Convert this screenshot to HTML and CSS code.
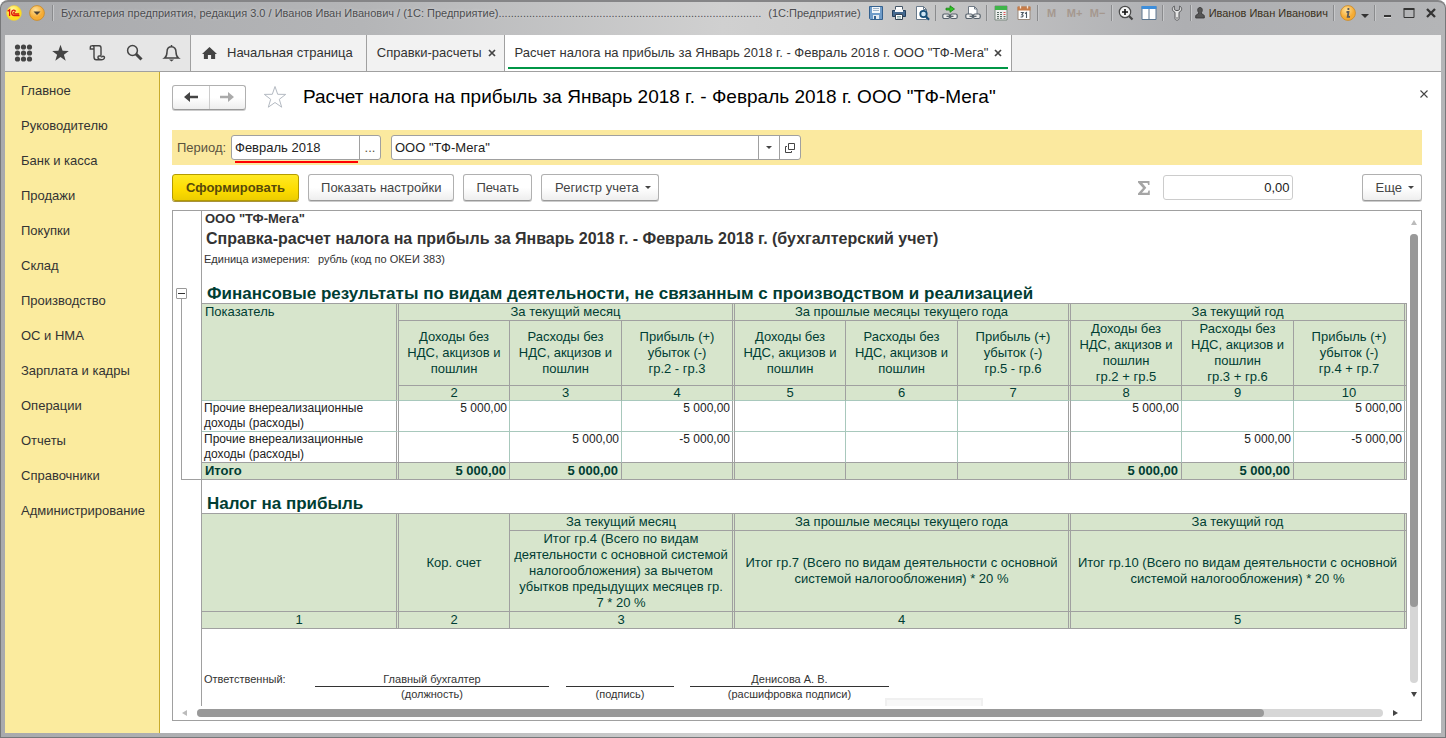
FILE: index.html
```html
<!DOCTYPE html>
<html lang="ru">
<head>
<meta charset="utf-8">
<title>Бухгалтерия предприятия</title>
<link rel="stylesheet" href="styles.css">
</head>
<body>
<div class="window">
  <header class="titlebar">
    <svg class="logo" viewBox="0 0 16 16"><defs><radialGradient id="ylw" cx=".4" cy=".3"><stop offset="0" stop-color="#fffbb0"/><stop offset="1" stop-color="#ffdf1e"/></radialGradient><radialGradient id="org" cx=".4" cy=".3"><stop offset="0" stop-color="#ffe19a"/><stop offset="1" stop-color="#f5ac35"/></radialGradient></defs><circle cx="8" cy="8" r="7.5" fill="url(#ylw)" stroke="#e6c64a" stroke-width=".6"/><path d="M1.600 6.200 3.600 4.700V11M9.600 6.400C8.800 4.400 5.600 4.700 5.600 7.800c0 2.300 1.400 2.800 2.600 2.800H13.500M8.900 7.300c-1.300-.5-1.600 1.500-.3 1.700h4.600" fill="none" stroke="#e0140c" stroke-width="1.300"/></svg>
    <button class="round" aria-label="Главное меню"><svg viewBox="0 0 16 16"><circle cx="8" cy="8" r="7.400" fill="url(#org)" stroke="#c98824" stroke-width=".8"/><path d="M4.500 6.500h7L8 10z" fill="#4a4034"/></svg></button>
    <i class="sep"></i>
    <span class="app">Бухгалтерия предприятия, редакция 3.0 / Иванов Иван Иванович / (1С: Предприятие)......................................................................................</span>
    <span class="app">(1С:Предприятие)</span>
    <div class="tools">
      <button aria-label="Сохранить"><svg viewBox="0 0 16 16"><path d="M1.500 1.500h13v13h-12l-1-1z" fill="#6f9cc9" stroke="#34618f"/><path d="M4 2h8v6H4z" fill="#f2f6fa"/><path d="M5 3.500h6M5 5.500h6" stroke="#9db3c8"/><path d="M5 10h6v4H5z" fill="#e4ebf2"/><path d="M6 11h2v3H6z" fill="#34618f"/></svg></button>
      <button aria-label="Печать"><svg viewBox="0 0 16 16"><path d="M4.500 1.500h7v5h-7z" fill="#fff" stroke="#456"/><path d="M1.500 5.500h13v6h-13z" fill="#44698f" stroke="#24405c"/><path d="M4 4.500h8V7H4z" fill="#f5f7f9"/><path d="M4.500 9.500h7v5h-7z" fill="#fff" stroke="#345"/><path d="M6 11.500h4M6 13h4" stroke="#8aa"/></svg></button>
      <button aria-label="Просмотр"><svg viewBox="0 0 16 16"><path d="M2.500 1.500h7l3 3v10h-10z" fill="#fff" stroke="#68798a"/><path d="M9.500 1.500v3h3" fill="none" stroke="#68798a"/><circle cx="9.500" cy="9" r="3.200" fill="#cfe6f5" stroke="#174f78" stroke-width="1.800"/><path d="m12 11.500 3 3.200" stroke="#174f78" stroke-width="2.200"/></svg></button>
      <i class="sep tight"></i>
      <button aria-label="Получить ссылку"><svg viewBox="0 0 16 16"><path d="M4 3.200h4V.8L12.500 4 8 7.300V5H4z" fill="#2fc527" stroke="#168212" stroke-width=".8"/><rect x=".8" y="9" width="6.700" height="4.500" rx="1.500" fill="#eee" stroke="#56616b" stroke-width="1.200"/><rect x="8.500" y="9" width="6.700" height="4.500" rx="1.500" fill="#eee" stroke="#56616b" stroke-width="1.200"/><path d="M4.500 11.300h7" stroke="#56616b" stroke-width="1.300"/></svg></button>
      <button aria-label="Перейти по ссылке"><svg viewBox="0 0 16 16"><path d="M3.500 10V1.500h6l2.500 2.500v6" fill="#fff" stroke="#6f7984"/><path d="M9.500 1.500V4H12" fill="none" stroke="#6f7984"/><rect x=".8" y="9" width="6.700" height="4.500" rx="1.500" fill="#eee" stroke="#56616b" stroke-width="1.200"/><rect x="8.500" y="9" width="6.700" height="4.500" rx="1.500" fill="#eee" stroke="#56616b" stroke-width="1.200"/><path d="M4.500 11.300h7" stroke="#56616b" stroke-width="1.300"/></svg></button>
      <i class="sep tight"></i>
      <button aria-label="Калькулятор"><svg viewBox="0 0 16 16"><path d="M2 1h12v14H2z" fill="#eef0ee" stroke="#7d8a80"/><path d="M2 1h12v4H2z" fill="#3fb54a"/><path d="M4 7.500h2m1 0h2M4 9.500h2m1 0h2M4 11.500h2m1 0h2M4 13.300h2m1 0h2" stroke="#5d6f66"/><path d="M10.500 7.500h2M10.500 9.500h2" stroke="#d55"/><path d="M10.500 11.500h2m-2 1.800h2" stroke="#5d6f66"/></svg></button>
      <button aria-label="Календарь"><svg viewBox="0 0 16 16"><path d="M2 2h12v12.500H2z" fill="#fff" stroke="#98897c"/><path d="M1.500 1.500h13v4h-13z" fill="#c67c49"/><path d="M4.500.5v3m7-3v3" stroke="#f3e2d2" stroke-width="1.300"/><path d="M4.700 7.500h2.600L5.800 9.600c2 0 1.900 2.900-1.200 2.400M9 8.500l1.500-1V13" fill="none" stroke="#4d5963" stroke-width="1.100"/></svg></button>
      <i class="sep tight"></i>
      <button class="mem">M</button><button class="mem">M+</button><button class="mem">M−</button>
      <i class="sep tight"></i>
      <button aria-label="Масштаб"><svg viewBox="0 0 16 16"><circle cx="7" cy="7" r="5.700" fill="#f4f4f4" stroke="#4b4b4b" stroke-width="1.200"/><path d="M4 7h6M7 4v6" stroke="#111" stroke-width="1.600"/><path d="m11 11 3.500 3.500" stroke="#444" stroke-width="2.200"/></svg></button>
      <button aria-label="Панели"><svg viewBox="0 0 16 16"><path d="M1 1.500h14v13H1z" fill="#fff" stroke="#5c7791"/><path d="M.5 1h15v3H.5z" fill="#3d8edb"/><path d="M8 4v10.500" stroke="#5c7791"/></svg></button>
      <i class="sep tight"></i>
      <button aria-label="Настройка"><svg viewBox="0 0 16 16"><path d="M5.300 1C2.500 2.500 2.700 6 6 7.300V13.500c0 2.200 4 2.200 4 0V7.300C13.300 6 13.500 2.500 10.700 1v3.500L9 5.500H7L5.300 4.500z" fill="#e6e6e6" stroke="#58595b"/><circle cx="8" cy="13" r=".8" fill="#555"/></svg></button>
      <i class="sep tight"></i>
    </div>
    <button class="user"><svg viewBox="0 0 10 12"><path d="M5 .5c3 0 2.800 4 1 5.600L9.300 8.500V11H.7V8.500L4 6.100C2.200 4.500 2 .5 5 .5z" fill="#555" stroke="#333" stroke-width=".8"/></svg>Иванов Иван Иванович</button>
    <i class="sep tight"></i>
    <button class="round" aria-label="Информация"><svg viewBox="0 0 16 16"><circle cx="8" cy="8" r="7.400" fill="url(#org)" stroke="#c98824" stroke-width=".8"/><path d="M8.400 3v2M6.500 7h2l-.8 4.800H10" fill="none" stroke="#5b5b5b" stroke-width="1.800"/></svg></button>
    <button class="down" aria-label="Ещё"><svg viewBox="0 0 8 4"><path d="M0 0h8L4 4z" fill="#333"/></svg></button>
    <i class="sep tight"></i>
    <div class="wm">
      <button aria-label="Свернуть"><svg viewBox="0 0 12 12"><path d="M3 9h7" stroke="#333" stroke-width="2"/><path d="M3 10.500h7" stroke="#ddd"/></svg></button>
      <button aria-label="Развернуть"><svg viewBox="0 0 12 12"><path d="M1 2.500h10v8H1z" fill="none" stroke="#333"/><path d="M.5 2h11" stroke="#333" stroke-width="2"/></svg></button>
      <button aria-label="Закрыть"><svg viewBox="0 0 12 12"><path d="m2 2 8 8m0-8-8 8" stroke="#333" stroke-width="2.300"/></svg></button>
    </div>
  </header>

  <nav class="tabs">
    <div class="quick">
      <button aria-label="Разделы"><svg viewBox="0 0 18 18"><g fill="#444"><circle cx="3" cy="3" r="2.600"/><circle cx="9" cy="3" r="2.600"/><circle cx="15" cy="3" r="2.600"/><circle cx="3" cy="9" r="2.600"/><circle cx="9" cy="9" r="2.600"/><circle cx="15" cy="9" r="2.600"/><circle cx="3" cy="15" r="2.600"/><circle cx="9" cy="15" r="2.600"/><circle cx="15" cy="15" r="2.600"/></g></svg></button>
      <button aria-label="Избранное"><svg viewBox="0 0 18 18"><path d="m9 .8 2.100 5.900 6.200.2-4.900 3.800 1.800 6L9 13.100l-5.200 3.600 1.800-6L.7 6.900l6.200-.2z" fill="#444"/></svg></button>
      <button aria-label="История"><svg viewBox="0 0 18 18"><path d="M5.500 5H1.800V3.500C1.800 1 5.500 1 5.500 3.500V13c0 2 1 2.800 2.300 2.800h5.700M3.500 1.700h7.200C12 1.700 12.500 2.500 12.500 4v7.800M12.500 12h-2c-.8 0-1 .4-1 1v.6c0 2.900 6.500 3 6.500 0 0-1.800-3-1.800-3 0" fill="none" stroke="#444" stroke-width="1.400"/></svg></button>
      <button aria-label="Поиск"><svg viewBox="0 0 18 18"><circle cx="7" cy="6.500" r="4.900" fill="none" stroke="#444" stroke-width="1.500"/><path d="m10.500 10 5.500 5.500" stroke="#444" stroke-width="3"/></svg></button>
      <button aria-label="Оповещения"><svg viewBox="0 0 18 18"><path d="M9 1v1.500M2 14h14c-2-1.500-2.500-3-2.500-6S12 2.800 9 2.800 4.500 5 4.500 8 4 12.500 2 14z" fill="none" stroke="#444" stroke-width="1.500"/><path d="M6.500 15.500h5L9 17.500z" fill="#444"/></svg></button>
    </div>
    <a class="tab home" href="#"><svg viewBox="0 0 16 14"><path d="M8 .5 16 8h-2v5.500H9.700V9H6.300v4.500H2V8H0z" fill="#444"/></svg>Начальная страница</a>
    <a class="tab" href="#">Справки-расчеты<svg class="x" viewBox="0 0 8 8"><path d="m1 1 6 6m0-6L1 7" stroke="#444" stroke-width="1.700"/></svg></a>
    <a class="tab active" href="#">Расчет налога на прибыль за Январь 2018 г. - Февраль 2018 г. ООО "ТФ-Мега"<svg class="x" viewBox="0 0 8 8"><path d="m1 1 6 6m0-6L1 7" stroke="#444" stroke-width="1.700"/></svg></a>
  </nav>

  <div class="body">
    <aside class="side">
      <a href="#">Главное</a><a href="#">Руководителю</a><a href="#">Банк и касса</a><a href="#">Продажи</a><a href="#">Покупки</a><a href="#">Склад</a><a href="#">Производство</a><a href="#">ОС и НМА</a><a href="#">Зарплата и кадры</a><a href="#">Операции</a><a href="#">Отчеты</a><a href="#">Справочники</a><a href="#">Администрирование</a>
    </aside>

    <main class="main">
      <div class="head">
        <div class="history btn">
          <button aria-label="Назад"><svg viewBox="0 0 14 10"><path d="M6 0v3.700h8v2.600H6V10L0 5z" fill="#444"/></svg></button>
          <button aria-label="Вперед"><svg viewBox="0 0 14 10"><path d="M8 0v3.700H0v2.600h8V10l6-5z" fill="#aaa"/></svg></button>
        </div>
        <button class="fav" aria-label="В избранное"><svg viewBox="0 0 24 24"><path d="m12 1.500 2.700 7.800 8 .1-6.400 4.900 2.400 7.900-6.700-4.700-6.700 4.700 2.400-7.900L1.300 9.400l8-.1z" fill="none" stroke="#b4bac2"/></svg></button>
        <h1>Расчет налога на прибыль за Январь 2018 г. - Февраль 2018 г. ООО "ТФ-Мега"</h1>
        <button class="close" aria-label="Закрыть"><svg viewBox="0 0 8 8"><path d="m.5.5 7 7m0-7-7 7" stroke="#444" stroke-width="1.100"/></svg></button>
      </div>

      <div class="period">
        <label for="period">Период:</label>
        <div class="field date"><input id="period" value="Февраль 2018"><button aria-label="Выбрать">...</button></div>
        <div class="field org"><input aria-label="Организация" value='ООО "ТФ-Мега"'><button aria-label="Список"><svg class="tri" viewBox="0 0 6 3"><path d="M0 0h6L3 3z" fill="#444"/></svg></button><button aria-label="Открыть"><svg class="open" viewBox="0 0 10 10"><path d="M3.500.5h6v6h-6zM2 3.500H.5v6h6V8" fill="none" stroke="#444"/></svg></button></div>
      </div>

      <div class="actions">
        <button class="btn primary">Сформировать</button>
        <button class="btn">Показать настройки</button>
        <button class="btn">Печать</button>
        <button class="btn drop">Регистр учета<svg class="tri" viewBox="0 0 6 3"><path d="M0 0h6L3 3z" fill="#444"/></svg></button>
        <label class="sigma" for="sum" aria-label="Сумма"><svg viewBox="0 0 12 14"><path d="M0 0h11.500v4h-1.300L9.500 2H4.300l4 4.800L4 11.800h5.700l.8-2.300h1.300V14H0v-1.500l5-5.600-5-5.500z" fill="#a5a5a5"/></svg></label>
        <input id="sum" class="sum" value="0,00">
        <button class="btn drop">Еще<svg class="tri" viewBox="0 0 6 3"><path d="M0 0h6L3 3z" fill="#444"/></svg></button>
      </div>

      <section class="sheet">
        <div class="doc">
          <div class="block">
            <div class="gutter"></div>
            <div class="intro">
              <p class="company">ООО "ТФ-Мега"</p>
              <h2>Справка-расчет налога на прибыль за Январь 2018 г. - Февраль 2018 г. (бухгалтерский учет)</h2>
              <p class="unit"><span>Единица измерения:</span><span>рубль (код по ОКЕИ 383)</span></p>
            </div>
          </div>
          <div class="block">
            <div class="gutter group"><button class="fold" aria-label="Свернуть группу"></button><div class="bracket"></div></div>
            <div>
              <h3>Финансовые результаты по видам деятельности, не связанным с производством и реализацией</h3>
              <table>
                <colgroup><col class="c-name"><col class="c-a"><col class="c-b"><col class="c-c"><col class="c-a"><col class="c-b"><col class="c-c"><col class="c-a"><col class="c-b"><col class="c-c"></colgroup>
                <thead>
                  <tr class="caps"><th class="name dbl light" rowspan="3">Показатель</th><th class="dbl" colspan="3">За текущий месяц</th><th class="dbl" colspan="3">За прошлые месяцы текущего года</th><th class="dbl" colspan="3">За текущий год</th></tr>
                  <tr class="tall"><th>Доходы без<br>НДС, акцизов и<br>пошлин</th><th>Расходы без<br>НДС, акцизов и<br>пошлин</th><th class="dbl">Прибыль (+)<br>убыток (-)<br>гр.2 - гр.3</th><th>Доходы без<br>НДС, акцизов и<br>пошлин</th><th>Расходы без<br>НДС, акцизов и<br>пошлин</th><th class="dbl">Прибыль (+)<br>убыток (-)<br>гр.5 - гр.6</th><th>Доходы без<br>НДС, акцизов и<br>пошлин<br>гр.2 + гр.5</th><th>Расходы без<br>НДС, акцизов и<br>пошлин<br>гр.3 + гр.6</th><th class="dbl">Прибыль (+)<br>убыток (-)<br>гр.4 + гр.7</th></tr>
                  <tr class="nums"><th>2</th><th>3</th><th class="dbl">4</th><th>5</th><th>6</th><th class="dbl">7</th><th>8</th><th>9</th><th class="dbl">10</th></tr>
                </thead>
                <tbody>
                  <tr><td class="name dbl">Прочие внереализационные доходы (расходы)</td><td>5 000,00</td><td></td><td class="dbl">5 000,00</td><td></td><td></td><td class="dbl"></td><td>5 000,00</td><td></td><td class="dbl">5 000,00</td></tr>
                  <tr class="last"><td class="name dbl">Прочие внереализационные доходы (расходы)</td><td></td><td>5 000,00</td><td class="dbl">-5 000,00</td><td></td><td></td><td class="dbl"></td><td></td><td>5 000,00</td><td class="dbl">-5 000,00</td></tr>
                </tbody>
                <tfoot>
                  <tr><td class="name dbl">Итого</td><td>5 000,00</td><td>5 000,00</td><td class="dbl"></td><td></td><td></td><td class="dbl"></td><td>5 000,00</td><td>5 000,00</td><td class="dbl"></td></tr>
                </tfoot>
              </table>
            </div>
          </div>
          <div class="block">
            <div class="gutter"></div>
            <div class="tax">
              <h3>Налог на прибыль</h3>
              <table>
                <colgroup><col class="c-name"><col class="c-a"><col class="c-b"><col class="c-c"><col class="c-a"><col class="c-b"><col class="c-c"><col class="c-a"><col class="c-b"><col class="c-c"></colgroup>
                <thead>
                  <tr class="caps"><th class="dbl" rowspan="2"></th><th rowspan="2">Кор. счет</th><th class="dbl" colspan="2">За текущий месяц</th><th class="dbl" colspan="3">За прошлые месяцы текущего года</th><th class="dbl" colspan="3">За текущий год</th></tr>
                  <tr class="tall"><th class="dbl" colspan="2">Итог гр.4 (Всего по видам деятельности с основной системой налогообложения) за вычетом убытков предыдущих месяцев гр.<br>7 * 20 %</th><th class="dbl" colspan="3">Итог гр.7 (Всего по видам деятельности с основной системой налогообложения) * 20 %</th><th class="dbl" colspan="3">Итог гр.10 (Всего по видам деятельности с основной системой налогообложения) * 20 %</th></tr>
                  <tr class="caps"><th class="dbl">1</th><th>2</th><th class="dbl" colspan="2">3</th><th class="dbl" colspan="3">4</th><th class="dbl" colspan="3">5</th></tr>
                </thead>
              </table>
            </div>
          </div>
          <div class="block rest">
            <div class="gutter"></div>
            <div class="signs">
              <span class="who">Ответственный:</span>
              <div class="sign post"><b>Главный бухгалтер</b><small>(должность)</small></div>
              <div class="sign pen"><b></b><small>(подпись)</small></div>
              <div class="sign fio"><b>Денисова А. В.</b><small>(расшифровка подписи)</small></div>
              <i class="stub"></i>
            </div>
          </div>
        </div>
        <div class="vbar"><svg viewBox="0 0 6 5"><path d="M0 5h6L3 0z" fill="#bbb"/></svg><div class="track"><div class="thumb"></div></div><svg viewBox="0 0 6 5"><path d="M0 0h6L3 5z" fill="#444"/></svg></div>
        <div class="hbar"><svg viewBox="0 0 5 6"><path d="M5 0v6L0 3z" fill="#bbb"/></svg><div class="track"><div class="thumb"></div></div><svg viewBox="0 0 5 6"><path d="M0 0v6l5-3z" fill="#444"/></svg></div>
      </section>
    </main>
  </div>
</div>
</body>
</html>
```
FILE: styles.css
```css
* { box-sizing: border-box; }
html, body { height: 100%; }
body { margin: 0; background: #fff; font: 13px/16px "Liberation Sans", Arial, sans-serif; color: #333; }
button { padding: 0; border: 0; background: none; font: inherit; color: inherit; display: flex; align-items: center; justify-content: center; }
input { font: inherit; color: #222; min-width: 0; }
a { color: inherit; text-decoration: none; }
h1, h2, h3, p { margin: 0; }
svg { display: block; flex: none; }

.window { height: 100vh; min-height: 100%; display: flex; flex-direction: column; padding: 0 4px 4px; border: 1px solid #77787a; border-top: 2px solid #858587; border-radius: 8px 8px 0 0; background: linear-gradient(90deg, #a9aaad 0, #b4b5b7 25%, #d0d0d0 50%, #cbcbcb 60%, #aeafb2 82%, #b4b5b7 100%); }

.titlebar { height: 33px; flex: none; display: flex; align-items: flex-start; gap: 7px; padding: 3px 4px 0 1px; font-size: 11px; color: #4c4d50; white-space: nowrap; }
.titlebar > *, .tools > * { flex: none; height: 16px; }
.titlebar .logo { width: 16px; }
.titlebar svg { width: 16px; height: 16px; }
.sep { width: 2px; border-left: 1px solid #8a8b8d; border-right: 1px solid #c6c7c9; }
.app { line-height: 16px; text-shadow: 0 0 3px #dcdcdc; }
.tools { display: flex; gap: 7px; margin: 0 -2px 0 auto; }
.tools button { width: 16px; }
.titlebar .tight { margin: 0 -2px; }
.tools .mem { color: #a5988f; font-weight: bold; }
.titlebar .user svg { width: 10px; height: 12px; margin-right: 4px; }
.user { color: #3a311c; }
.titlebar .down { width: 8px; margin-left: -2px; padding-top: 5px; }
.titlebar .down svg { width: 8px; height: 4px; }
.wm { display: flex; gap: 10px; align-items: center; }
.wm button svg { width: 12px; height: 12px; }

.tabs { flex: none; display: flex; height: 37px; background: #f0f0f0; border-bottom: 1px solid #a0a0a0; }
.quick { width: 186px; flex: none; background: #e6e6e6; border-right: 1px solid #a0a0a0; display: flex; align-items: center; justify-content: space-between; padding: 0 9px; }
.quick svg { width: 19px; height: 18px; }
.tab { display: flex; align-items: center; padding: 0 8px 0 10px; border-right: 1px solid #a0a0a0; background: #f2f2f2; white-space: nowrap; position: relative; }
.tab.home { padding: 0 13px 0 11px; }
.tab.home svg { width: 15px; height: 14px; margin-right: 10px; }
.tab .x { width: 8px; height: 8px; margin-left: 6px; }
.tab.active { background: #fff; padding-right: 9px; }
.tab.active::after { content: ""; position: absolute; left: 3px; right: 3px; bottom: 2px; height: 2px; background: #009646; }

.body { flex: 1; min-height: 0; display: flex; background: #fff; }
.side { width: 155px; flex: none; background: #fbeb9e; border-right: 1px solid #c8ab2c; padding-top: 1px; }
.side a { display: block; padding-left: 16px; line-height: 35px; }
.main { flex: 1; min-width: 0; display: flex; flex-direction: column; padding: 12px 19px 12px 12px; }

.btn { height: 27px; border: 1px solid #b0b0b0; border-bottom-color: #999; border-radius: 3px; background: linear-gradient(#fff 50%, #eee); box-shadow: 0 1px 0 #ccc; color: #444; white-space: nowrap; padding: 0 12px; }
.head { display: flex; align-items: center; height: 26px; }
.history { display: flex; width: 74px; height: 25px; padding: 0; }
.history button { flex: 1; }
.history button + button { border-left: 1px solid #ccc; }
.history svg { width: 14px; height: 10px; }
.fav { margin-left: 17px; }
.fav svg { width: 24px; height: 24px; }
h1 { flex: 1; margin-left: 16px; font-size: 19px; line-height: 26px; font-weight: normal; color: #000; white-space: nowrap; }
.close { align-self: flex-start; width: 8px; height: 20px; margin-right: -6px; }
.close svg { width: 8px; height: 8px; }

.period { display: flex; align-items: center; height: 35px; margin-top: 20px; padding-left: 5px; background: #fbe99f; color: #5a5340; }
.period label { width: 54px; }
.field { display: flex; position: relative; height: 25px; background: #fff; border: 1px solid #a0a0a0; border-radius: 3px; }
.field input { flex: 1; border: 0; background: none; padding: 0 3px; outline: 0; }
.field button { width: 21px; border-left: 1px solid #a0a0a0; }
.date { width: 150px; margin-right: 10px; }
.date::after { content: ""; position: absolute; left: 3px; right: 22px; bottom: -4px; height: 2px; background: #f00; }
.org { width: 410px; }
.tri { width: 6px; height: 3px; }
.open { width: 10px; height: 10px; }

.actions { display: flex; align-items: center; gap: 9px; margin-top: 9px; }
.btn.drop { padding: 0 7px 0 13px; }
.btn .tri { margin-left: 6px; }
.btn.primary { padding: 0 13px; background: linear-gradient(#ffe924, #fddc00 60%, #eccd00); border-color: #b49b00; box-shadow: 0 1px 0 #a8933a; font-weight: bold; color: #57490a; }
.sigma { margin-left: auto; }
.sigma svg { width: 12px; height: 14px; }
.sum { width: 130px; height: 25px; margin: 0 60px 0 4px; border: 1px solid #ccc; border-radius: 3px; text-align: right; padding: 0 2px; }

.sheet { flex: 1; min-height: 0; margin-top: 9px; border: 1px solid #a0a0a0; display: grid; grid-template: minmax(0, 1fr) 14px / minmax(0, 1fr) 14px; }
.doc { display: flex; flex-direction: column; min-height: 0; overflow: hidden; }
.block { flex: none; display: grid; grid-template-columns: 29px minmax(0, 1fr); }
.rest { flex: 1; min-height: 0; }
.gutter { border-right: 1px solid #a0a0a0; }
.intro { height: 73px; white-space: nowrap; }
.company { font-weight: bold; padding-left: 3px; }
h2 { font-size: 16px; line-height: 24px; padding-left: 4px; }
.unit { font-size: 11px; line-height: 16px; padding-left: 2px; display: flex; gap: 8px; }
.group { display: flex; flex-direction: column; padding: 4px 0 0 3px; }
.fold { flex: none; width: 11px; height: 11px; border: 1px solid #999; border-radius: 1px; }
.fold::before { content: ""; width: 7px; height: 1px; background: #333; }
.bracket { flex: 1; margin-left: 5px; border-left: 1px solid #a0a0a0; border-bottom: 1px solid #a0a0a0; }
h3 { height: 19px; font-size: 17px; line-height: 19px; padding-left: 5px; color: #003d33; white-space: nowrap; }
.tax { padding-top: 14px; }

table { width: 100%; table-layout: fixed; border-spacing: 0; border-top: 1px solid #a0a0a0; font-size: 13px; line-height: 16px; color: #003d33; }
.c-name { width: 197px; }
.c-a { width: 111px; }
.c-b { width: 112px; }
.c-c { width: 113px; }
th, td { padding: 0 2px; border-right: 1px solid #a0a0a0; border-bottom: 1px solid #a0a0a0; }
th { background: #d7e5cc; font-weight: normal; }
.dbl { border-right: 3px double #a0a0a0; }
.caps th, tfoot td { height: 17px; }
.tall th { height: 65px; }
.tax .tall th { height: 81px; }
.nums th { height: 15px; line-height: 14px; border-bottom-color: #a8c8bc; }
th.light { border-bottom-color: #a8c8bc; }
.name, td.name { text-align: left; vertical-align: top; }
th.name { padding-left: 3px; }
td { text-align: right; vertical-align: top; }
tbody td { height: 31px; font-size: 12px; line-height: 15px; color: #222; border-color: #a8c8bc; }
.last td { border-bottom-color: #a0a0a0; }
tfoot td { background: #d7e5cc; font-weight: bold; padding: 0 3px; }

.signs { position: relative; display: flex; align-items: flex-start; padding: 43px 0 0 2px; font-size: 11px; line-height: 14px; overflow: hidden; }
.who { width: 111px; }
.sign { display: flex; flex-direction: column; text-align: center; }
.sign b { font-weight: normal; height: 15px; border-bottom: 1px solid #333; }
.sign small { font-size: 11px; line-height: 15px; }
.post { width: 234px; }
.pen { width: 108px; margin: 0 16px 0 17px; }
.fio { width: 199px; }
.stub { position: absolute; left: 683px; bottom: 0; width: 98px; height: 8px; border: 2px solid #f0f0f0; border-bottom: 0; background: #f8f8f8; }

.vbar { display: flex; flex-direction: column; align-items: center; padding: 9px 0; gap: 9px; }
.vbar svg { width: 6px; height: 5px; }
.track { flex: 1; border-radius: 4px; background: #d6d6d6; }
.thumb { border-radius: 4px; background: #999; }
.vbar .track { width: 8px; }
.vbar .thumb { height: 83%; }
.hbar { display: flex; align-items: center; padding: 0 9px; gap: 10px; }
.hbar svg { width: 5px; height: 6px; }
.hbar .track { height: 8px; }
.hbar .thumb { height: 8px; width: 90%; }
```
